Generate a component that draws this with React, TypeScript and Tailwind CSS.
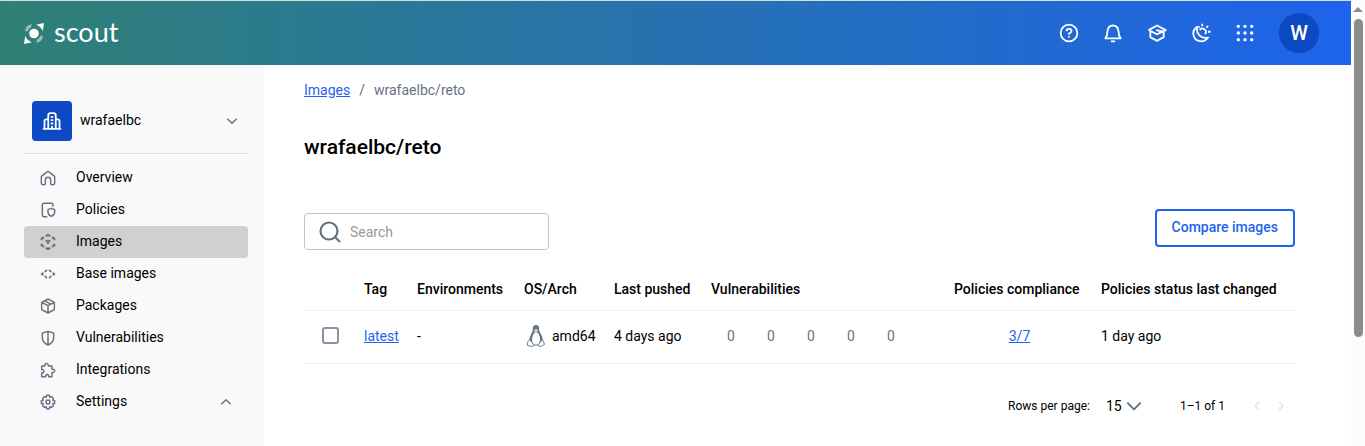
import type { ReactNode } from 'react';

type IconProps = { className?: string; children: ReactNode };

function Icon({ className = 'size-4', children }: IconProps) {
  return (
    <svg
      viewBox="0 0 24 24"
      className={`${className} shrink-0`}
      fill="none"
      stroke="currentColor"
      strokeWidth="2.2"
      strokeLinejoin="round"
      aria-hidden="true"
    >
      {children}
    </svg>
  );
}

const navItems: { label: string; icon: ReactNode }[] = [
  {
    label: 'Overview',
    icon: <path d="M2 9.6 L10.6 2.8 Q12 1.8 13.4 2.8 L22 9.6 V20 Q22 22 20 22 H17.5 Q16 22 16 20.500 V14.500 Q16 11 12 11 Q8 11 8 14.500 V20.500 Q8 22 6.500 22 H4 Q2 22 2 20 Z" />,
  },
  {
    label: 'Policies',
    icon: (
      <>
        <path d="M11 22 H6 Q3.500 22 3.500 19.500 V4.500 Q3.500 2 6 2 H17 Q19.500 2 19.500 4.500 V7" />
        <path d="M17 9.500 L22 11.500 V15 Q22 19.500 17 21.500 Q12 19.500 12 15 V11.500 Z" />
      </>
    ),
  },
  {
    label: 'Images',
    icon: (
      <>
        <path d="M8.500 3 L12 1.500 L15.500 3" strokeWidth="3" />
        <path d="M8.500 21 L12 22.500 L15.500 21" strokeWidth="3" />
        <path d="M2.500 9.500 V7 L6 4.700 M18 4.700 L21.500 7 V9.500 M2.500 14.500 V17 L6 19.300 M18 19.300 L21.500 17 V14.500" strokeWidth="3" />
        <path d="M8.500 9.500 L12 11.500 L15.500 9.500 M12 11.500 V15" strokeWidth="3" />
      </>
    ),
  },
  {
    label: 'Base images',
    icon: (
      <>
        <path d="M0.500 12 L5 8.500 V15.500 Z M23.500 12 L19 8.500 V15.500 Z" fill="currentColor" stroke="none" />
        <path d="M8 9.500 V8 L10.500 6 M13.500 6 L16 8 V9.500 M8 14.500 V16 L10.500 18 M13.500 18 L16 16 V14.500" strokeWidth="2.500" />
      </>
    ),
  },
  {
    label: 'Packages',
    icon: <path d="M12 1.500 L21.500 6.500 V17.500 L12 22.500 L2.500 17.500 V6.500 Z M2.500 6.500 L12 11.500 L21.500 6.500 M12 11.500 V22.500 M7 4.200 L16.500 9.200" />,
  },
  {
    label: 'Vulnerabilities',
    icon: <path d="M12 2 L20.500 4.500 V11.500 Q20.500 18.500 12 22.500 Q3.500 18.500 3.500 11.500 V4.500 Z M12 2 V22" />,
  },
  {
    label: 'Integrations',
    icon: <path d="M2.500 6 H7.500 C6 1 13.500 1 12.500 6 H18 V11 C23.500 9.500 23.500 17 18 15.500 V22 H13 C14 17.500 7.500 17.500 8.500 22 H2.500 V16 C7 17 7 10.500 2.500 11.500 Z" />,
  },
  {
    label: 'Settings',
    icon: (
      <>
        <path d="M10 2 H14 L14.700 4.800 L17.200 3.900 L20.100 6.800 L19.200 9.300 L22 10 V14 L19.200 14.700 L20.100 17.200 L17.200 20.100 L14.700 19.200 L14 22 H10 L9.300 19.200 L6.800 20.100 L3.900 17.200 L4.800 14.700 L2 14 V10 L4.800 9.300 L3.900 6.800 L6.800 3.900 L9.300 4.800 Z" />
        <circle cx="12" cy="12" r="3" />
      </>
    ),
  },
];

const headerActions: { label: string; icon: ReactNode }[] = [
  {
    label: 'Help',
    icon: (
      <>
        <circle cx="12" cy="12" r="10" />
        <path d="M9 9.800 Q9 7 12 7 Q15 7 15 9.500 Q15 11.200 12 12.700 V14" />
        <path d="M12 15.500 V17.500" />
      </>
    ),
  },
  {
    label: 'Notifications',
    icon: <path d="M2.800 18.500 H21.200 Q18.800 15.500 18.600 10 Q18 3 12 3 Q6 3 5.400 10 Q5.200 15.500 2.800 18.500 Z M9.500 22 H14.500" />,
  },
  {
    label: 'Learning center',
    icon: <path d="M2 8.500 L12 3 L22.500 8.500 L12 13.500 L7.500 11.300 M2 8.500 L7.500 11.300 M11 8.500 L20 10.500 V17 L12 21.500 L4 17 V10 M12 13.500 L20 10" />,
  },
  {
    label: 'Toggle theme',
    icon: (
      <>
        <path d="M7.500 4.500 C-1 10 3 22 12.500 22 Q17.500 22 20.500 17.500 C12 19.500 5.500 13 7.500 4.500 Z" />
        <path d="M10.500 8.500 Q12.500 5.500 15.500 7 Q19.500 9.500 17 13.500 M13.500 1 V4 M18.500 5.500 L20.500 3.500 M20.500 10.500 H23.500 M9 4 L10.500 5.500" />
      </>
    ),
  },
  {
    label: 'Apps',
    icon: (
      <g fill="currentColor" stroke="none">
        {[4, 12, 20].map((y) => [4, 12, 20].map((x) => <circle key={`${x}-${y}`} cx={x} cy={y} r="2" />))}
      </g>
    ),
  },
];

function ScoutMark() {
  return (
    <svg viewBox="0 0 20 21" className="h-[21px] w-5 shrink-0" fill="#fff" aria-hidden="true">
      <path d="M20 0 L18.800 8 Q17 3.500 12 1.800 Z M0 21 L1.200 13 Q3 17.500 8 19.200 Z" />
      <circle cx="10" cy="10.500" r="4.800" />
      <path d="M1 8 Q1.500 2 8 1.200 L6.800 4.500 Q4.500 5.500 3.500 8.500 Z M19 13 Q18.500 19 12 19.800 L13.200 16.500 Q15.500 15.500 16.500 12.500 Z" opacity="0.500" />
    </svg>
  );
}

function Tux() {
  return (
    <svg viewBox="0 0 20 24" className="h-6 w-5 shrink-0" fill="#677285" aria-hidden="true">
      <path d="M7 3.500 Q7.200 1 10 1 Q12.900 1 13 4 Q12.900 7.500 14.500 9.500 Q17 13 16.800 17 L14.500 19.500 L5.500 19.500 L3.200 17 Q3.200 13 5.500 9.500 Q7 7.500 7 3.500 Z" />
      <path d="M8.500 8.500 L11.500 8.500 Q14.500 12 14 16 L13.200 20 Q10 21.500 6.800 20 L6 16 Q5.800 12 8.500 8.500 Z" fill="#fff" />
      <path d="M8.300 5.500 Q10 4.300 11.700 5.500 L11.500 7.800 L10 8.800 L8.500 7.800 Z" fill="#fff" opacity="0.700" />
      <path d="M3.700 15.500 L7.500 20.500 Q7.500 22.800 5.500 22.600 L1.500 21.300 L1.700 18 Z M16.300 15.500 L12.500 20.500 Q12.500 22.800 14.500 22.600 L18.500 20.500 L17.700 18 Z" fill="#fff" stroke="#677285" strokeWidth="0.900" />
      <path d="M7 21 H13" stroke="#677285" />
    </svg>
  );
}

function Header() {
  return (
    <header className="flex h-16 items-center justify-between bg-linear-to-r/srgb from-[#2f8074] to-[#1d63ed] pr-8 pl-6 text-white">
      <a href="#scout" className="flex items-center gap-[10px]">
        <ScoutMark />
        <span className="pb-[2px] font-[Lato,sans-serif] text-[27px] leading-8">scout</span>
      </a>
      <div className="flex items-center gap-6">
        {headerActions.map(({ label, icon }) => (
          <button key={label} type="button" aria-label={label}>
            <Icon className="size-5">{icon}</Icon>
          </button>
        ))}
        <button type="button" className="size-10 rounded-full bg-[#0c49c2] text-xl font-medium">
          W
        </button>
      </div>
    </header>
  );
}

function Sidebar() {
  return (
    <aside className="w-[264px] shrink-0 bg-[#f9f9fa] pt-7 pr-4 pl-6">
      <button type="button" className="flex w-full items-center gap-2 border-b border-[#e1e2e6] px-2 pt-2 pb-3 text-left">
        <span className="flex size-10 items-center justify-center rounded bg-[#0c49c2] text-white">
          <Icon className="size-5">
            <path d="M1 21.500 H23 M3 21 V12 Q3 10 5 10 H7 M21 21 V12 Q21 10 19 10 H17 M7.500 21 V5 Q7.500 2.500 10 2.500 H14 Q16.500 2.500 16.500 5 V21 M10.500 7 H13.500 M10.500 11 H13.500 M10.500 15 H13.500 M12 18 V21" />
          </Icon>
        </span>
        <span className="grow pb-[2px]">wrafaelbc</span>
        <Icon className="size-4 text-[#677285]">
          <path d="M5 8.500 L12 15.500 L19 8.500" />
        </Icon>
      </button>
      <nav className="pt-2">
        {navItems.map(({ label, icon }) => (
          <a
            key={label}
            href="#nav"
            className={`flex h-8 items-center gap-5 rounded pr-[14px] pl-4 ${label === 'Images' ? 'bg-[#d0d0d0]' : ''}`}
          >
            <span className="text-[#677285]">
              <Icon>{icon}</Icon>
            </span>
            <span className="grow pb-[2px]">{label}</span>
            {label === 'Settings' && (
              <Icon className="size-4 text-[#677285]">
                <path d="M5 15.500 L12 8.500 L19 15.500" />
              </Icon>
            )}
          </a>
        ))}
      </nav>
    </aside>
  );
}

function ImagesTable() {
  return (
    <table className="mt-[18px] w-full table-fixed border-collapse text-left">
      <colgroup>
        <col className="w-[52px]" />
        <col className="w-[53px]" />
        <col className="w-[107px]" />
        <col className="w-[90px]" />
        <col className="w-[97px]" />
        <col />
        <col className="w-[147px]" />
        <col className="w-[202px]" />
      </colgroup>
      <thead>
        <tr className="h-[42px] border-b border-[#f0f0f2] whitespace-nowrap *:px-2 *:font-medium">
          <td />
          <th>Tag</th>
          <th>Environments</th>
          <th>OS/Arch</th>
          <th>Last pushed</th>
          <th>Vulnerabilities</th>
          <th>Policies compliance</th>
          <th>Policies status last changed</th>
        </tr>
      </thead>
      <tbody>
        <tr className="h-[53px] border-b border-[#f0f0f2] whitespace-nowrap *:px-2 *:pb-[2px]">
          <td>
            <input
              type="checkbox"
              aria-label="Select latest"
              className="mx-auto block size-[17px] appearance-none rounded-[3px] border-2 border-[#8993a5] bg-white"
            />
          </td>
          <td>
            <a href="#latest" className="text-[#1d63ed] underline">latest</a>
          </td>
          <td>-</td>
          <td>
            <span className="flex items-center gap-[6px] pl-[2px]">
              <Tux />
              amd64
            </span>
          </td>
          <td>4 days ago</td>
          <td>
            <span className="flex text-[#677285]">
              {['critical', 'high', 'medium', 'low', 'unspecified'].map((severity) => (
                <span key={severity} className="w-10 text-center">0</span>
              ))}
            </span>
          </td>
          <td className="text-center">
            <a href="#policies" className="text-[#1d63ed] underline">3/7</a>
          </td>
          <td>1 day ago</td>
        </tr>
      </tbody>
    </table>
  );
}

function Pagination() {
  return (
    <div className="flex items-center justify-end pt-8 pr-[6px] text-xs">
      <label htmlFor="rows">Rows per page:</label>
      <div className="relative ml-4 flex items-center">
        <select id="rows" defaultValue="15" className="w-10 appearance-none bg-transparent text-sm">
          <option>15</option>
          <option>30</option>
        </select>
        <Icon className="pointer-events-none absolute left-5 size-4 text-[#677285]">
          <path d="M2 7 L12 17 L22 7" strokeWidth="3" />
        </Icon>
      </div>
      <span className="ml-[34px]">1–1 of 1</span>
      <button type="button" disabled aria-label="Previous page" className="ml-6 text-[#e1e2e6]">
        <Icon>
          <path d="M15 6 L9 12 L15 18" />
        </Icon>
      </button>
      <button type="button" disabled aria-label="Next page" className="ml-2 text-[#e1e2e6]">
        <Icon>
          <path d="M9 6 L15 12 L9 18" />
        </Icon>
      </button>
    </div>
  );
}

export default function App() {
  return (
    <div className="flex min-h-screen bg-white font-[Roboto,sans-serif] text-sm text-black">
      <div className="flex min-w-0 grow flex-col border-t border-[#dcdcdc]">
        <Header />
        <div className="flex grow">
          <Sidebar />
          <main className="min-w-0 grow pt-[15px] pr-14 pl-10">
            <nav aria-label="Breadcrumb" className="flex gap-[9px] text-[#677285]">
              <a href="#images" className="text-[#1d63ed] underline">Images</a>
              <span>/</span>
              <span>wrafaelbc/reto</span>
            </nav>
            <h1 className="mt-[33px] text-[21px] leading-7 font-medium">wrafaelbc/reto</h1>
            <div className="mt-12 flex items-start justify-between">
              <label className="mt-1 flex h-[37px] w-[245px] items-center gap-2 rounded border border-[#c4c4c4] px-[13px]">
                <Icon className="size-6 text-[#677285]">
                  <circle cx="11" cy="11" r="8.500" />
                  <path d="M17 17 L22 22" />
                </Icon>
                <input
                  type="text"
                  aria-label="Search"
                  placeholder="Search"
                  className="w-full min-w-0 bg-transparent outline-none placeholder:text-[#999]"
                />
              </label>
              <button type="button" className="h-[38px] rounded border-2 border-[#1d63ed] px-[15px] pb-[2px] font-medium text-[#1d63ed]">
                Compare images
              </button>
            </div>
            <ImagesTable />
            <Pagination />
          </main>
        </div>
      </div>
      <div aria-hidden="true" className="flex w-[14px] shrink-0 flex-col items-center bg-[#fcfcfc] pt-[7px]">
        <svg viewBox="0 0 10 5" className="h-[5px] w-[10px]" fill="#8b8b8b">
          <path d="M5 0 L10 5 H0 Z" />
        </svg>
        <div className="mt-[7px] h-[318px] w-[9px] rounded-full bg-[#8b8b8b]" />
      </div>
    </div>
  );
}
